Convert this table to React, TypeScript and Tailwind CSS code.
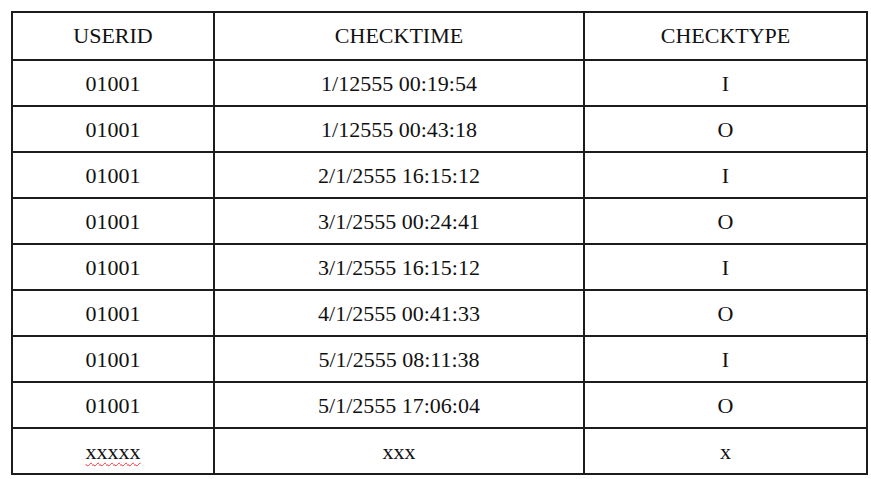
import React from "react";

const rows: [string, string, string][] = [
  ["01001", "1/12555 00:19:54", "I"],
  ["01001", "1/12555 00:43:18", "O"],
  ["01001", "2/1/2555 16:15:12", "I"],
  ["01001", "3/1/2555 00:24:41", "O"],
  ["01001", "3/1/2555 16:15:12", "I"],
  ["01001", "4/1/2555 00:41:33", "O"],
  ["01001", "5/1/2555 08:11:38", "I"],
  ["01001", "5/1/2555 17:06:04", "O"],
];

export default function App() {
  return (
    <div
      className="w-[871px] h-[479px] bg-white pt-[11px] pl-[11px]"
      style={{ fontFamily: '"Liberation Serif", "Times New Roman", serif' }}
    >
      <table className="table-fixed border-collapse border-2 border-[#1c1c1c] w-[855px] text-[22px] text-[#111]">
        <colgroup>
          <col className="w-[202px]" />
          <col className="w-[370px]" />
          <col className="w-[283px]" />
        </colgroup>
        <thead>
          <tr className="h-[48px]">
            <th className="border-2 border-[#1c1c1c] font-normal text-center align-middle p-0 pb-[2px]">USERID</th>
            <th className="border-2 border-[#1c1c1c] font-normal text-center align-middle p-0 pb-[2px]">CHECKTIME</th>
            <th className="border-2 border-[#1c1c1c] font-normal text-center align-middle p-0 pb-[2px]">CHECKTYPE</th>
          </tr>
        </thead>
        <tbody>
          {rows.map((r, i) => (
            <tr key={i} className="h-[46px]">
              <td className="border-2 border-[#1c1c1c] text-center align-middle p-0">{r[0]}</td>
              <td className="border-2 border-[#1c1c1c] text-center align-middle p-0">{r[1]}</td>
              <td className="border-2 border-[#1c1c1c] text-center align-middle p-0">{r[2]}</td>
            </tr>
          ))}
          <tr className="h-[46px]">
            <td className="border-2 border-[#1c1c1c] text-center align-middle p-0 pt-[1px]">
              <span className="underline decoration-wavy decoration-red-500 decoration-1 underline-offset-[3px]">xxxxx</span>
            </td>
            <td className="border-2 border-[#1c1c1c] text-center align-middle p-0 pt-[1px]">xxx</td>
            <td className="border-2 border-[#1c1c1c] text-center align-middle p-0 pt-[1px]">x</td>
          </tr>
        </tbody>
      </table>
    </div>
  );
}
